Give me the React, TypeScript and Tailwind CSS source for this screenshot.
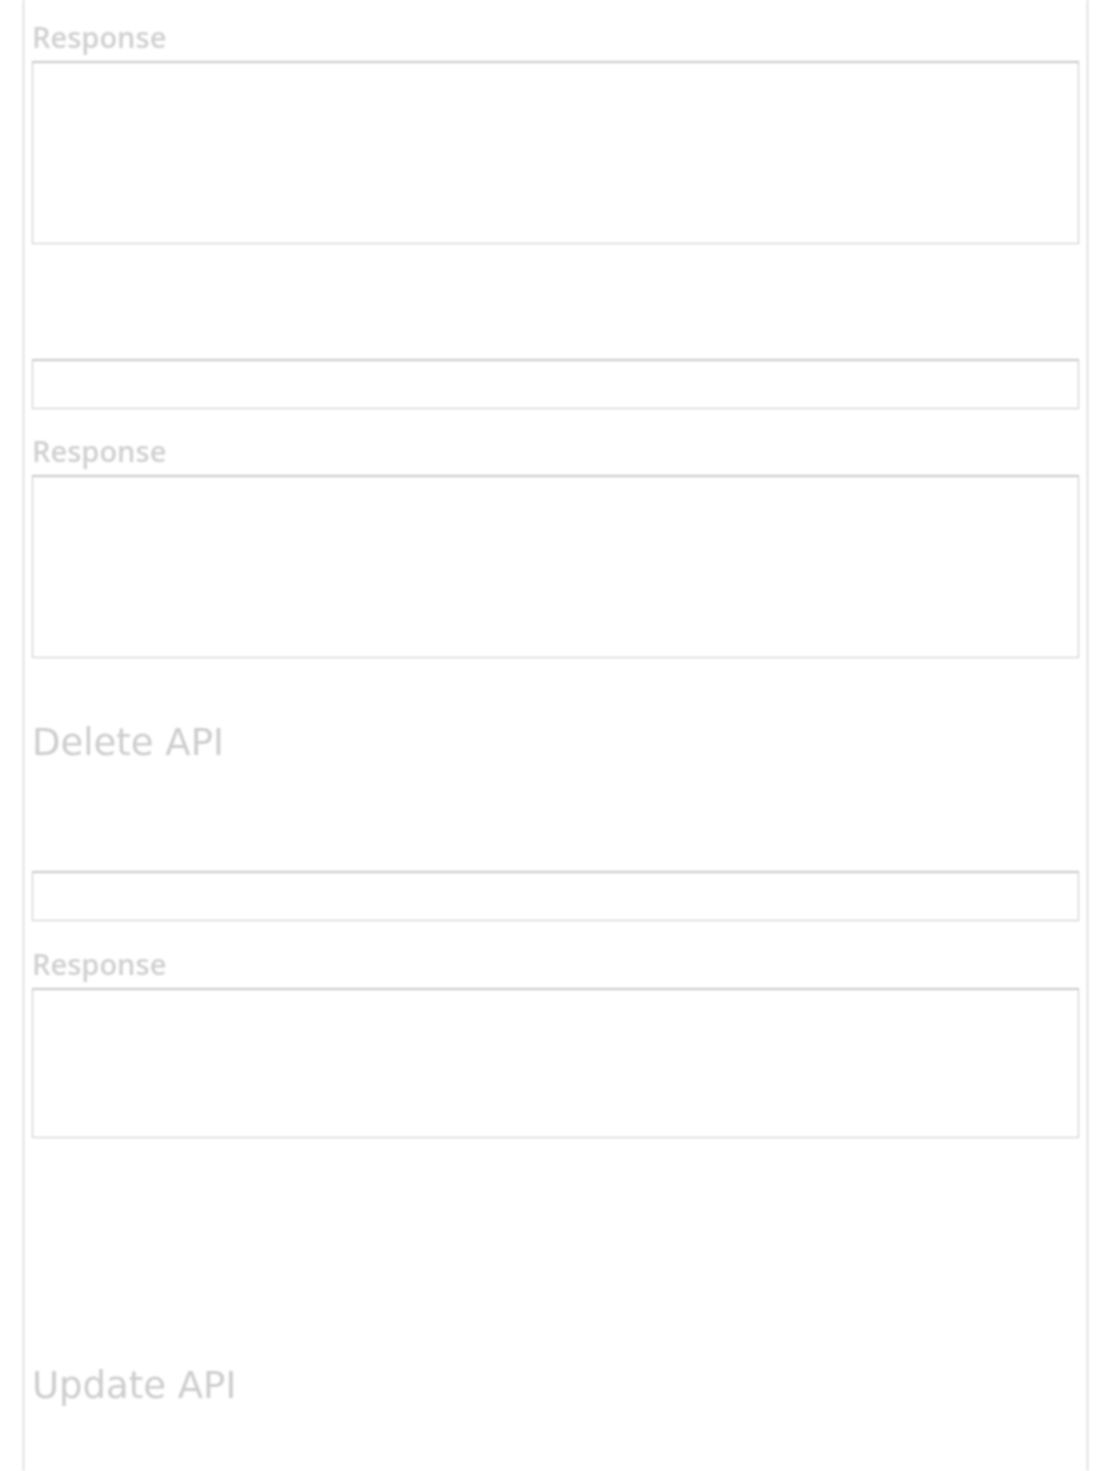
export default function App() {
	return (
		<div className="min-h-[1471px] bg-white blur-[0.8px]">
			<div className="ml-[23px] w-[1065px] min-h-[1471px] border-x border-[#c8c8c8] px-[8px] pt-[20px]">
				{/* Create API - response */}
				<Label>Response</Label>
				<div className="mt-[7px] h-[183px] border border-[#c8c8c8] border-t-2"></div>

				<div className="mt-[115px] h-[50px] border border-[#c8c8c8] border-t-2"></div>
				<div className="mt-[25px]">
					<Label>Response</Label>
				</div>
				<div className="mt-[7px] h-[183px] border border-[#c8c8c8] border-t-2"></div>

				{/* Delete API */}
				<h2 className="mt-[61px] font-['DejaVu_Sans',sans-serif] text-[37px] leading-[48px] text-[#cdcdcd]">
					Delete API
				</h2>
				<div className="mt-[104px] h-[50px] border border-[#c8c8c8] border-t-2"></div>
				<div className="mt-[26px]">
					<Label>Response</Label>
				</div>
				<div className="mt-[7px] h-[150px] border border-[#c8c8c8] border-t-2"></div>

				{/* Update API */}
				<h2 className="mt-[224px] font-['DejaVu_Sans',sans-serif] text-[37px] leading-[48px] text-[#cdcdcd]">
					Update API
				</h2>
			</div>
		</div>
	)
}

function Label({ children }: { children: React.ReactNode }) {
	return (
		<div className="font-['Open_Sans',sans-serif] text-[29px] font-semibold leading-[34px] text-[#d0d0d0]">
			{children}
		</div>
	)
}
